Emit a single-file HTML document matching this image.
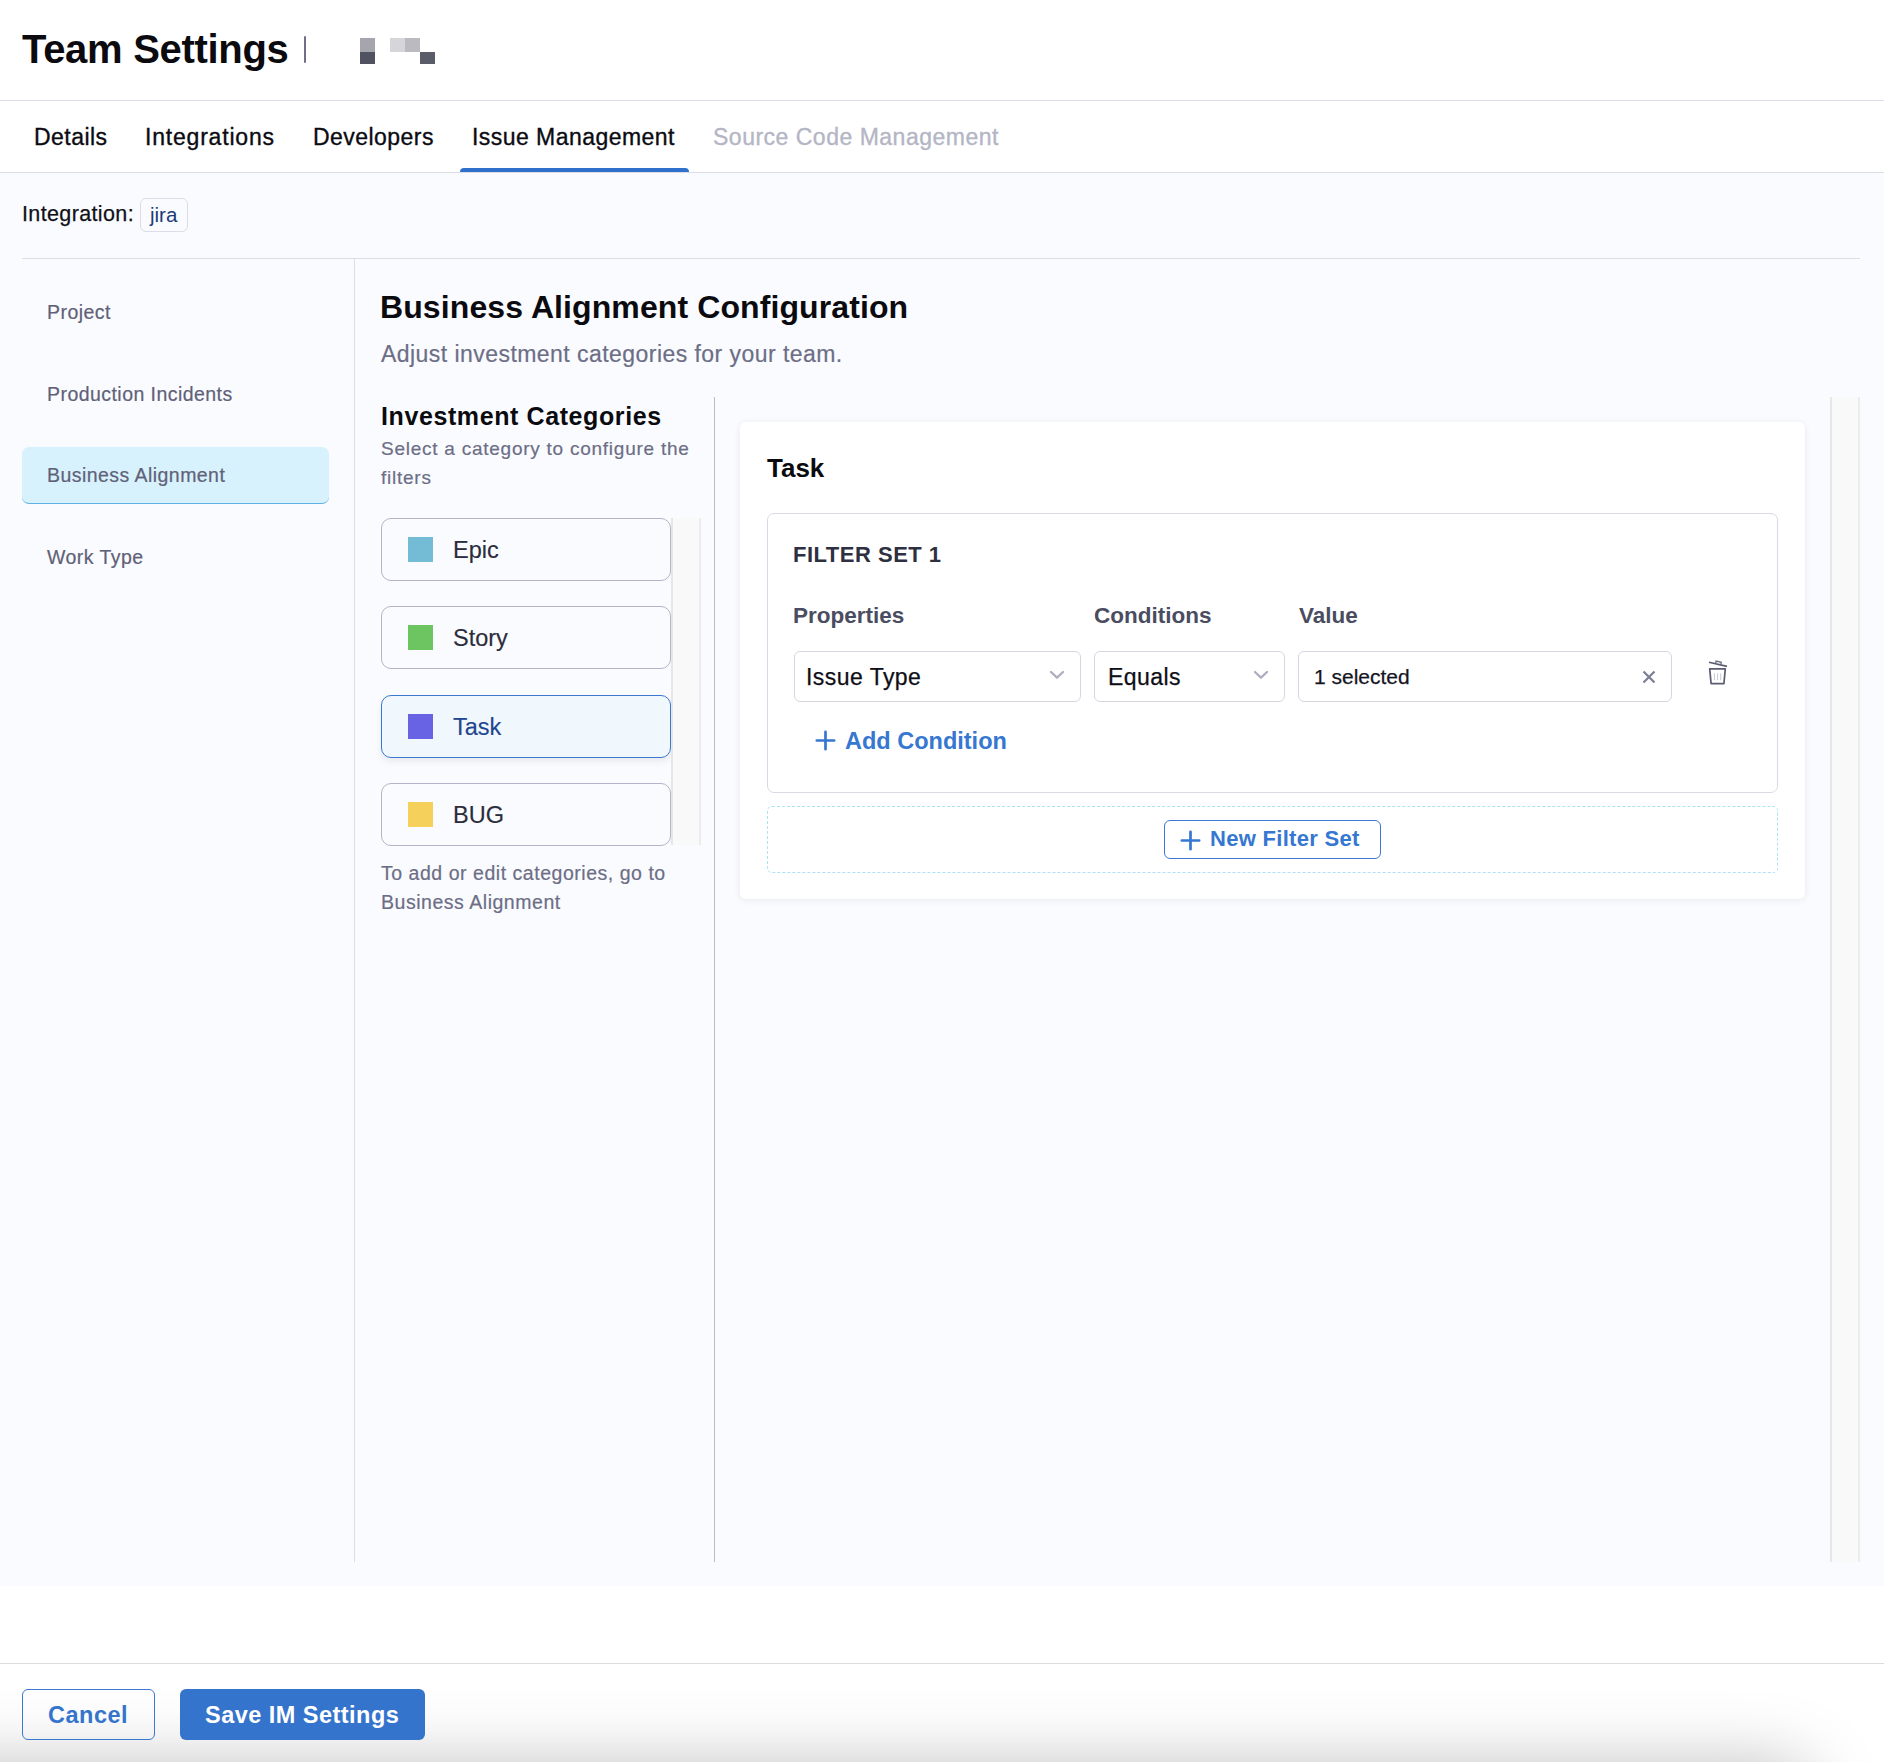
<!DOCTYPE html>
<html><head><meta charset="utf-8">
<style>
*{box-sizing:border-box;margin:0;padding:0}
html,body{width:1884px;height:1762px;overflow:hidden;background:#fff;font-family:"Liberation Sans",sans-serif}
.a{position:absolute;white-space:nowrap}
#hdr{position:absolute;left:0;top:0;width:1884px;height:101px;background:#fff;border-bottom:1px solid #dcdce6}
#tabs{position:absolute;left:0;top:101px;width:1884px;height:72px;background:#fff;border-bottom:1px solid #dcdce6}
#body{position:absolute;left:0;top:173px;width:1884px;height:1413px;background:#fafbfe}
.tab{font-size:23px;line-height:23px;color:#0b0b12;letter-spacing:0.45px;-webkit-text-stroke:0.35px currentColor}
.nav{font-size:19.5px;line-height:20px;color:#5f6178;letter-spacing:0.45px;-webkit-text-stroke:0.2px currentColor}
.gray{color:#6c6e86;-webkit-text-stroke:0.2px currentColor}
.card{position:absolute;left:381px;width:290px;height:63px;border:1px solid #b3b4c8;border-radius:10px;background:#fafbfe}
.sw{position:absolute;left:26px;top:18px;width:25px;height:25px}
.ct{position:absolute;left:71px;top:19px;font-size:23.5px;line-height:24px;color:#2b2c3c;white-space:nowrap;-webkit-text-stroke:0.15px currentColor}
.sel{position:absolute;top:651px;height:51px;border:1px solid #d6d6e2;border-radius:6px;background:#fff}
.st{position:absolute;top:14px;font-size:23px;line-height:23px;color:#0e0e16;white-space:nowrap;letter-spacing:0.45px;-webkit-text-stroke:0.25px currentColor}
.hd{font-size:22.5px;line-height:23px;font-weight:700;color:#4a4c5f}
.track{position:absolute;background:#f9f9f9;border-left:2px solid #e7e7e7;border-right:2px solid #ececec}
</style></head><body>
<div id="hdr"></div>
<div class="a" style="left:22px;top:29px;font-size:40px;line-height:40px;font-weight:700;color:#0b0b0f;letter-spacing:-0.3px">Team Settings</div>
<div class="a" style="left:304px;top:36px;width:2px;height:27px;background:#6f7088;border-radius:1px"></div>
<div class="a" style="left:360px;top:38px;width:15px;height:14px;background:#a6a5ae"></div>
<div class="a" style="left:360px;top:52px;width:15px;height:12px;background:#51525f"></div>
<div class="a" style="left:390px;top:38px;width:15px;height:14px;background:#d6d5da"></div>
<div class="a" style="left:405px;top:38px;width:15px;height:14px;background:#bbbac0"></div>
<div class="a" style="left:420px;top:52px;width:15px;height:12px;background:#5b5c6a"></div>

<div id="tabs"></div>
<div class="a tab" style="left:34px;top:126px">Details</div>
<div class="a tab" style="left:145px;top:126px;letter-spacing:0.8px">Integrations</div>
<div class="a tab" style="left:313px;top:126px">Developers</div>
<div class="a tab" style="left:472px;top:126px">Issue Management</div>
<div class="a tab" style="left:713px;top:126px;color:#b4b5c5;letter-spacing:0.5px">Source Code Management</div>
<div class="a" style="left:460px;top:168px;width:229px;height:4px;background:#3070cd;border-radius:4px 4px 0 0"></div>

<div id="body"></div>
<div class="a" style="left:22px;top:203px;font-size:21.5px;line-height:22px;color:#101018;letter-spacing:0.37px;-webkit-text-stroke:0.25px currentColor">Integration:</div>
<div class="a" style="left:140px;top:198px;width:48px;height:34px;border:1px solid #dcdde8;border-radius:6px;background:#fafbfe"></div>
<div class="a" style="left:150px;top:204px;font-size:20.5px;line-height:22px;color:#1b3c78">jira</div>
<div class="a" style="left:22px;top:258px;width:1838px;height:1px;background:#dcdde8"></div>

<!-- left nav -->
<div class="a" style="left:354px;top:259px;width:1px;height:1303px;background:#dcdde6"></div>
<div class="a nav" style="left:47px;top:302px">Project</div>
<div class="a nav" style="left:47px;top:384px">Production Incidents</div>
<div class="a" style="left:22px;top:447px;width:307px;height:57px;background:#d7f2fc;border-radius:7px;border-bottom:1.5px solid #5fb0e3"></div>
<div class="a nav" style="left:47px;top:465px">Business Alignment</div>
<div class="a nav" style="left:47px;top:547px">Work Type</div>

<!-- titles -->
<div class="a" style="left:380px;top:291px;font-size:32px;line-height:32px;font-weight:700;color:#0b0b0f;letter-spacing:0.1px">Business Alignment Configuration</div>
<div class="a gray" style="left:381px;top:343px;font-size:23px;line-height:23px;letter-spacing:0.45px">Adjust investment categories for your team.</div>

<!-- investment categories column -->
<div class="a" style="left:381px;top:403px;font-size:25px;line-height:26px;font-weight:700;color:#0b0b0f;letter-spacing:0.6px">Investment Categories</div>
<div class="a gray" style="left:381px;top:435px;font-size:19px;line-height:28.5px;white-space:normal;width:340px;letter-spacing:0.75px">Select a category to configure the<br>filters</div>

<div class="card" style="top:518px"><div class="sw" style="background:#74bcd6"></div><div class="ct">Epic</div></div>
<div class="card" style="top:606px"><div class="sw" style="background:#6cc561"></div><div class="ct">Story</div></div>
<div class="card" style="top:695px;border-color:#3b78d0;background:#f1f8fd;box-shadow:0 4px 6px rgba(40,50,90,.08)"><div class="sw" style="background:#6863e4"></div><div class="ct" style="color:#1f4690">Task</div></div>
<div class="card" style="top:783px"><div class="sw" style="background:#f5d05b"></div><div class="ct">BUG</div></div>
<div class="track" style="left:671px;top:518px;width:30px;height:327px"></div>

<div class="a gray" style="left:381px;top:859px;font-size:19.5px;line-height:28.6px;white-space:normal;width:340px;letter-spacing:0.53px">To add or edit categories, go to<br>Business Alignment</div>

<div class="a" style="left:714px;top:397px;width:1px;height:1165px;background:#b9bacb"></div>

<!-- right card -->
<div class="a" style="left:740px;top:422px;width:1065px;height:477px;background:#fff;border-radius:6px;box-shadow:0 1px 6px rgba(60,70,110,.10)"></div>
<div class="a" style="left:767px;top:455px;font-size:26px;line-height:26px;font-weight:700;color:#0b0b0f">Task</div>
<div class="a" style="left:767px;top:513px;width:1011px;height:280px;border:1px solid #d9dae6;border-radius:7px;background:#fff"></div>
<div class="a" style="left:793px;top:544px;font-size:22px;line-height:22px;font-weight:700;color:#2e3041;letter-spacing:0.5px">FILTER SET 1</div>
<div class="a hd" style="left:793px;top:604px">Properties</div>
<div class="a hd" style="left:1094px;top:604px">Conditions</div>
<div class="a hd" style="left:1299px;top:604px">Value</div>

<div class="sel" style="left:794px;width:287px"><div class="st" style="left:11px">Issue Type</div>
<svg style="position:absolute;left:254px;top:18px" width="16" height="10" viewBox="0 0 16 10"><path d="M2 2 L8 7.7 L14 2" fill="none" stroke="#aeafbe" stroke-width="2.3" stroke-linecap="round" stroke-linejoin="round"/></svg></div>
<div class="sel" style="left:1094px;width:191px"><div class="st" style="left:13px">Equals</div>
<svg style="position:absolute;left:158px;top:18px" width="16" height="10" viewBox="0 0 16 10"><path d="M2 2 L8 7.7 L14 2" fill="none" stroke="#aeafbe" stroke-width="2.3" stroke-linecap="round" stroke-linejoin="round"/></svg></div>
<div class="sel" style="left:1298px;width:374px"><div class="st" style="left:15px;font-size:21px;top:13px;color:#15151f;letter-spacing:0">1 selected</div>
<svg style="position:absolute;left:343px;top:18px" width="14" height="14" viewBox="0 0 14 14"><path d="M1.5 1.5 L12.5 12.5 M12.5 1.5 L1.5 12.5" fill="none" stroke="#7c7e95" stroke-width="2.2"/></svg></div>

<svg class="a" style="left:1706px;top:658px" width="24" height="28" viewBox="0 0 24 28">
<path d="M3 4.3 L21 8.4" stroke="#5a5c70" stroke-width="1.6" fill="none"/>
<path d="M9.6 5.1 L10.1 3.1 L15.3 4.3 L14.9 6.3" stroke="#6a6c80" stroke-width="1.3" fill="none"/>
<path d="M3.7 10.8 L19.3 10.8 L17.9 25.6 L5.1 25.6 Z" stroke="#5a5c70" stroke-width="1.7" fill="none" stroke-linejoin="round"/>
<path d="M8.4 15.3 L8.6 22.3 M11.6 15.3 L11.6 22.3 M14.8 15.3 L14.6 22.3" stroke="#c9cad6" stroke-width="1" fill="none"/>
</svg>

<svg class="a" style="left:815px;top:730px" width="21" height="21" viewBox="0 0 21 21"><path d="M10.5 1.8 V19.2 M1.8 10.5 H19.2" stroke="#3677d1" stroke-width="2.7" stroke-linecap="round"/></svg>
<div class="a" style="left:845px;top:729px;font-size:23.5px;line-height:24px;font-weight:700;color:#3677d1">Add Condition</div>

<div class="a" style="left:767px;top:806px;width:1011px;height:67px;border:1px dashed #ace1f6;border-radius:5px"></div>
<div class="a" style="left:1164px;top:820px;width:217px;height:39px;border:1.3px solid #3b78d0;border-radius:6px;background:#fff"></div>
<svg class="a" style="left:1180px;top:830px" width="21" height="21" viewBox="0 0 21 21"><path d="M10.5 1.8 V19.2 M1.8 10.5 H19.2" stroke="#3677d1" stroke-width="2.7" stroke-linecap="round"/></svg>
<div class="a" style="left:1210px;top:828px;font-size:22px;line-height:22px;font-weight:700;color:#3677d1;letter-spacing:0.3px">New Filter Set</div>

<div class="track" style="left:1830px;top:397px;width:30px;height:1165px"></div>

<!-- footer -->
<div class="a" style="left:0;top:1663px;width:1884px;height:1px;background:#dcdcdc"></div>
<div class="a" style="left:0;top:1664px;width:1884px;height:98px;overflow:hidden">
  <div style="position:absolute;left:-200px;top:100px;width:2010px;height:100px;border-radius:30px;box-shadow:0 0 70px 0 rgba(0,0,0,.25)"></div>
</div>
<div class="a" style="left:22px;top:1689px;width:133px;height:51px;border:1.3px solid #3b78d0;border-radius:6px;background:transparent"></div>
<div class="a" style="left:48px;top:1703px;font-size:23.5px;line-height:24px;font-weight:700;color:#3574cc;letter-spacing:0.5px">Cancel</div>
<div class="a" style="left:180px;top:1689px;width:245px;height:51px;background:#3574cc;border-radius:6px"></div>
<div class="a" style="left:205px;top:1703px;font-size:23.5px;line-height:24px;font-weight:700;color:#fff;letter-spacing:0.47px">Save IM Settings</div>
</body></html>
